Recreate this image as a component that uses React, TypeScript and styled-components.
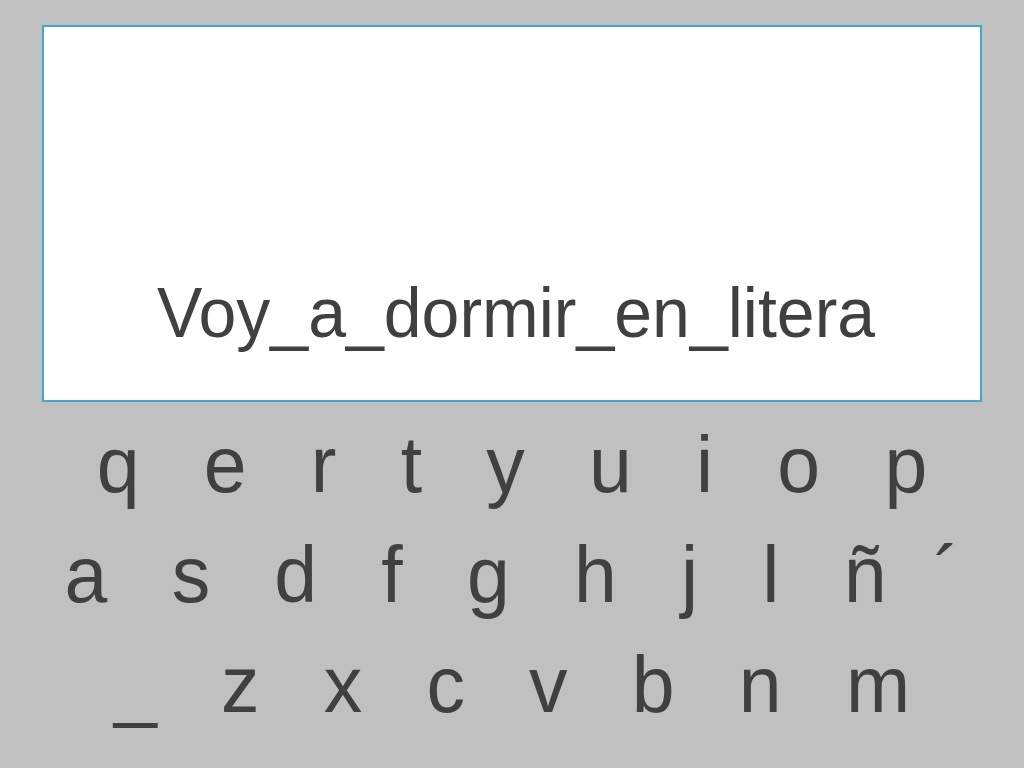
import React from "react";
import styled, { createGlobalStyle } from "styled-components";

const GlobalStyle = createGlobalStyle`
  html, body {
    margin: 0;
    padding: 0;
    background: #c0c0c0;
  }
  body {
    font-family: "Liberation Sans", Arial, sans-serif;
    color: #404040;
  }
`;

const Page = styled.div`
  width: 1024px;
  height: 768px;
  box-sizing: border-box;
  padding-top: 25px;
  display: flex;
  flex-direction: column;
  overflow: hidden;
`;

const Display = styled.div`
  margin: 0 42px;
  height: 377px;
  box-sizing: border-box;
  background: #ffffff;
  border: 2px solid #42a6ce;
  display: flex;
  flex-direction: column;
  justify-content: flex-end;
  align-items: center;
  padding: 0 0 53px 8px;
`;

const Phrase = styled.div`
  font-size: 68px;
  line-height: 68px;
  color: #404040;
  white-space: pre;
  transform: scaleY(1.045);
  transform-origin: 50% 85%;
`;

const Keyboard = styled.div`
  margin-top: 8px;
  display: flex;
  flex-direction: column;
  align-items: center;
`;

const Row = styled.div`
  display: flex;
  justify-content: center;
  gap: 0.834em;
  font-size: 77px;
  line-height: 110px;
  color: #404040;
`;

const Key = styled.span<{ $tight?: boolean }>`
  display: inline-block;
  white-space: pre;
  transform: scaleY(1.04);
  transform-origin: 50% 74%;
  margin-left: ${(p) => (p.$tight ? "-0.22em" : "0")};
`;

const rows: string[][] = [
  ["q", "e", "r", "t", "y", "u", "i", "o", "p"],
  ["a", "s", "d", "f", "g", "h", "j", "l", "ñ", "´"],
  ["_", "z", "x", "c", "v", "b", "n", "m"],
];

export default function App() {
  return (
    <>
      <GlobalStyle />
      <Page>
        <Display>
          <Phrase>Voy_a_dormir_en_litera</Phrase>
        </Display>
        <Keyboard>
          {rows.map((row, i) => (
            <Row key={i}>
              {row.map((k) => (
                <Key key={k} $tight={k === "´"}>
                  {k}
                </Key>
              ))}
            </Row>
          ))}
        </Keyboard>
      </Page>
    </>
  );
}
